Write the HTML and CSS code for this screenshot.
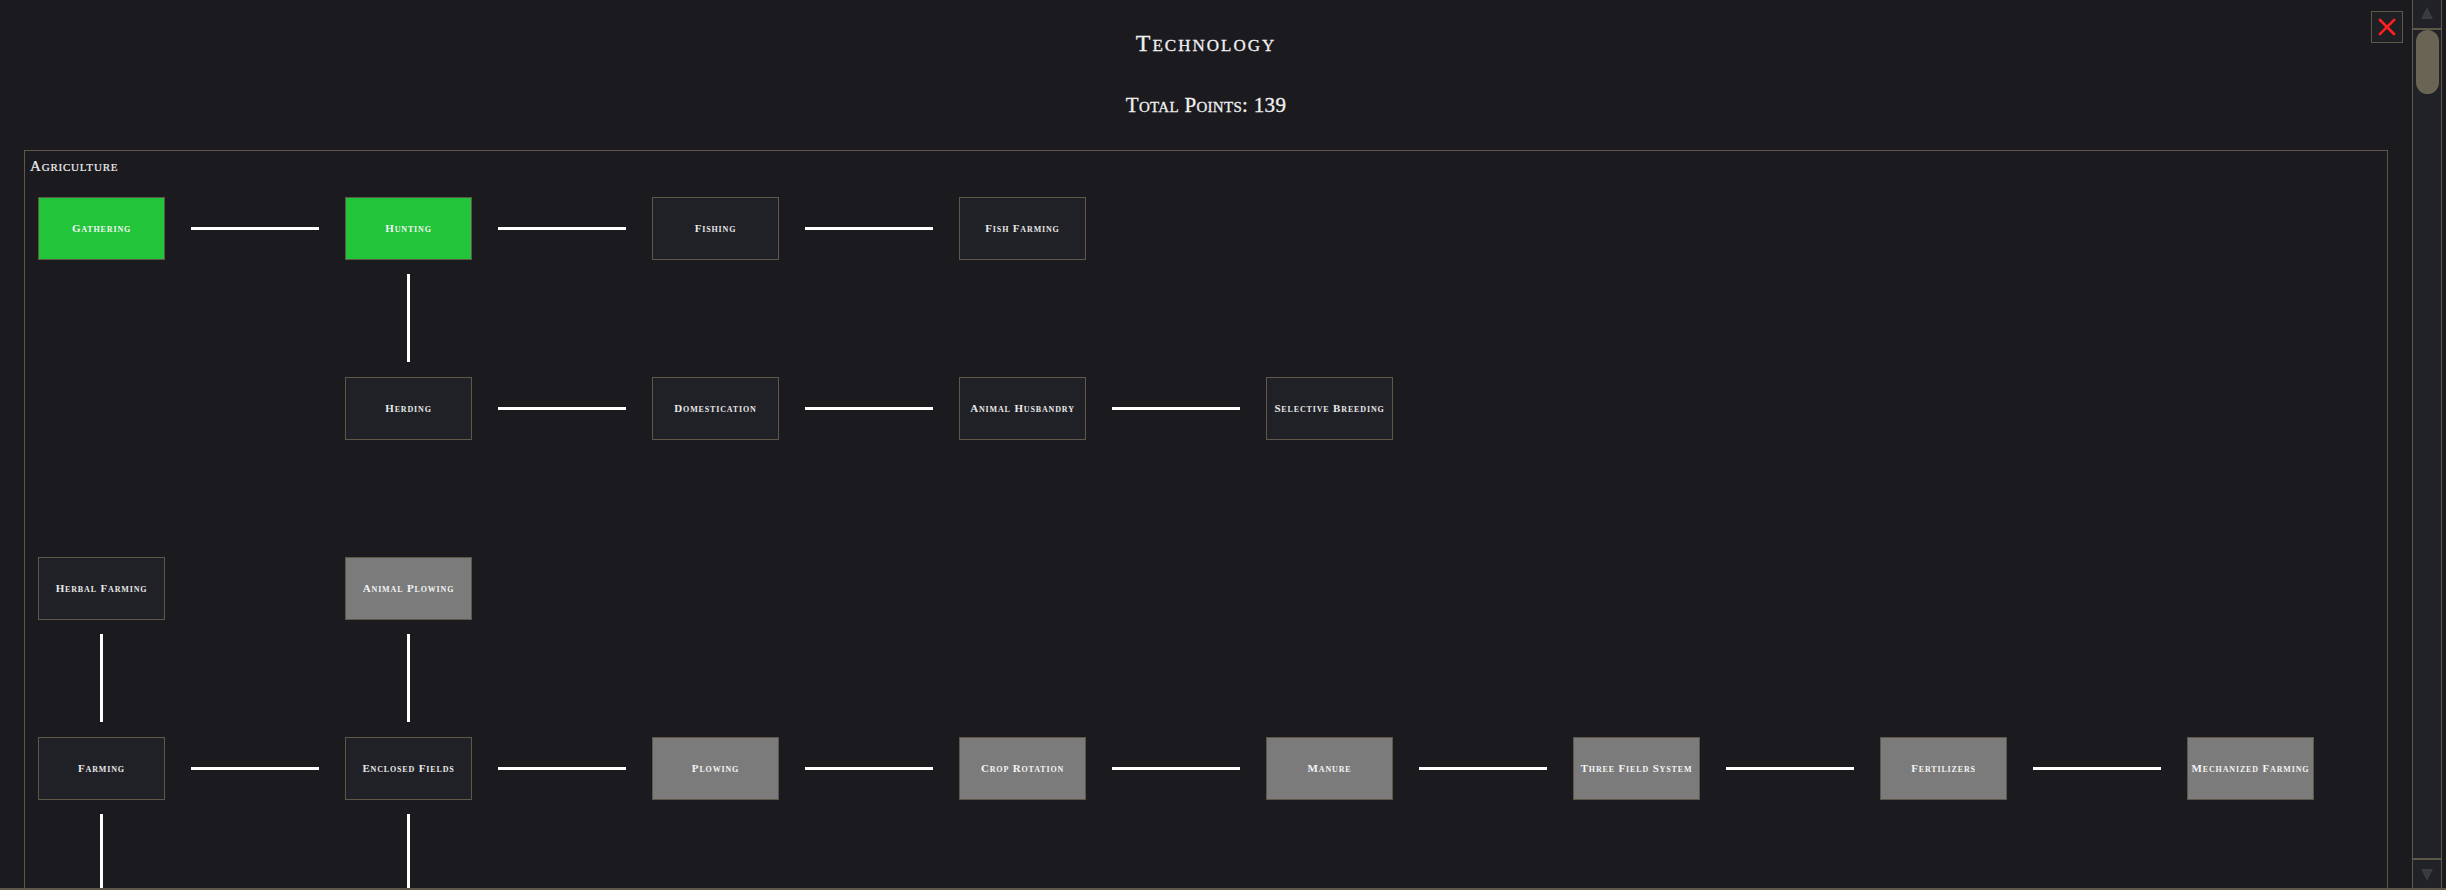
FILE: index.html
```html
<!DOCTYPE html>
<html lang="en">
<head>
<meta charset="utf-8">
<title>Technology</title>
<link rel="stylesheet" href="styles.css">
</head>
<body>
<div class="app">
  <main class="main">
    <h1 class="title">Technology</h1>
    <h2 class="points">Total Points: 139</h2>
    <section class="panel">
      <h3 class="panel-label">Agriculture</h3>
      <div class="tree">
        <div class="row">
          <div class="node done">Gathering</div><i class="h"></i>
          <div class="node done">Hunting</div><i class="h"></i>
          <div class="node">Fishing</div><i class="h"></i>
          <div class="node">Fish Farming</div>
        </div>
        <div class="vrow">
          <i class="e"></i><i class="e"></i><i class="v"></i>
        </div>
        <div class="row">
          <i class="e"></i><i class="e"></i>
          <div class="node">Herding</div><i class="h"></i>
          <div class="node">Domestication</div><i class="h"></i>
          <div class="node">Animal Husbandry</div><i class="h"></i>
          <div class="node">Selective Breeding</div>
        </div>
        <div class="vrow"></div>
        <div class="row">
          <div class="node">Herbal Farming</div><i class="e"></i>
          <div class="node locked">Animal Plowing</div>
        </div>
        <div class="vrow">
          <i class="v"></i><i class="e"></i><i class="v"></i>
        </div>
        <div class="row">
          <div class="node">Farming</div><i class="h"></i>
          <div class="node">Enclosed Fields</div><i class="h"></i>
          <div class="node locked">Plowing</div><i class="h"></i>
          <div class="node locked">Crop Rotation</div><i class="h"></i>
          <div class="node locked">Manure</div><i class="h"></i>
          <div class="node locked">Three Field System</div><i class="h"></i>
          <div class="node locked">Fertilizers</div><i class="h"></i>
          <div class="node locked">Mechanized Farming</div>
        </div>
        <div class="vrow">
          <i class="v"></i><i class="e"></i><i class="v"></i>
        </div>
      </div>
    </section>
  </main>
  <div class="scrollbar">
    <div class="sb-btn sb-up"><span class="tri-up"></span></div>
    <div class="sb-track"><div class="sb-thumb"></div></div>
    <div class="sb-btn sb-down"><span class="tri-down"></span></div>
  </div>
  <button class="close" aria-label="Close">
    <svg width="20" height="20" viewBox="0 0 20 20"><path d="M3 3 L17 17 M17 3 L3 17" stroke="#ff1f1f" stroke-width="2.6" stroke-linecap="square" fill="none"/></svg>
  </button>
</div>
</body>
</html>
```
FILE: styles.css
```css
* { box-sizing: border-box; }
html, body {
  margin: 0;
  padding: 0;
  background: #1b1a1f;
  height: 890px;
  overflow: hidden;
}
body {
  font-family: "Liberation Serif", "Times New Roman", serif;
  font-variant: small-caps;
  color: #e6e6e6;
}
.app {
  position: relative;
  display: flex;
  height: 890px;
  border-bottom: 2px solid #5f5848;
}
.main {
  flex: 1;
  min-width: 0;
  overflow: hidden;
  padding: 0 24px;
}
.title {
  margin: 31px 0 0;
  font-size: 24px;
  line-height: 24px;
  font-weight: normal;
  text-align: center;
  letter-spacing: 2px;
  color: #f0f0f0;
  -webkit-text-stroke: 0.3px #f0f0f0;
}
.points {
  margin: 40px 0 0;
  font-size: 21px;
  line-height: 21px;
  font-weight: normal;
  text-align: center;
  letter-spacing: 0.3px;
  color: #f0f0f0;
  -webkit-text-stroke: 0.3px #f0f0f0;
}
.panel {
  margin-top: 34px;
  border: 1px solid #5f5848;
  padding: 8px 0 0 5px;
}
.panel-label {
  margin: 0;
  font-size: 15px;
  line-height: 15px;
  font-weight: normal;
  letter-spacing: 0.8px;
  color: #f0f0f0;
  -webkit-text-stroke: 0.2px #f0f0f0;
}
.tree {
  margin-top: 23px;
  padding-left: 8px;
}
.row, .vrow {
  display: grid;
  grid-template-columns: repeat(7, 127px 180px) 127px;
}
.row { height: 63px; }
.vrow { height: 117px; }
.node {
  border: 1px solid #5f5848;
  background: #202126;
  display: flex;
  align-items: center;
  justify-content: center;
  font-size: 11px;
  line-height: 1;
  font-weight: bold;
  letter-spacing: 0.85px;
  white-space: nowrap;
  color: #e8e8e8;
}
.node.done { background: #22c43a; color: #f4f4f4; }
.node.locked { background: #7b7b7b; color: #f4f4f4; }
.h {
  display: block;
  align-self: center;
  height: 3px;
  margin: 0 26px;
  background: #ffffff;
}
.v {
  display: block;
  justify-self: center;
  width: 3px;
  height: 88px;
  margin-top: 14px;
  background: #ffffff;
}
.e { display: block; }
.scrollbar {
  width: 30px;
  margin-right: 4px;
  border-left: 1px solid #5f5848;
  border-right: 1px solid #5f5848;
  background: #202227;
  display: flex;
  flex-direction: column;
}
.sb-btn {
  height: 30px;
  display: flex;
  align-items: center;
  justify-content: center;
}
.sb-up { border-bottom: 2px solid #5f5848; }
.sb-down { border-top: 2px solid #5f5848; }
.sb-track { flex: 1; }
.sb-thumb {
  width: 23px;
  height: 64px;
  margin-left: 3px;
  border-radius: 12px;
  background: #6a6454;
}
.tri-up, .tri-down {
  width: 0;
  height: 0;
  border-left: 6px solid transparent;
  border-right: 6px solid transparent;
}
.tri-up { border-bottom: 12px solid #3a3b3f; margin-top: -2px; }
.tri-down { border-top: 12px solid #3a3b3f; margin-top: 2px; }
.close {
  position: absolute;
  top: 11px;
  right: 43px;
  width: 32px;
  height: 32px;
  padding: 0;
  border: 1px solid #5f5848;
  background: #1f2024;
  display: flex;
  align-items: center;
  justify-content: center;
  cursor: pointer;
}
.close svg { display: block; }
```
